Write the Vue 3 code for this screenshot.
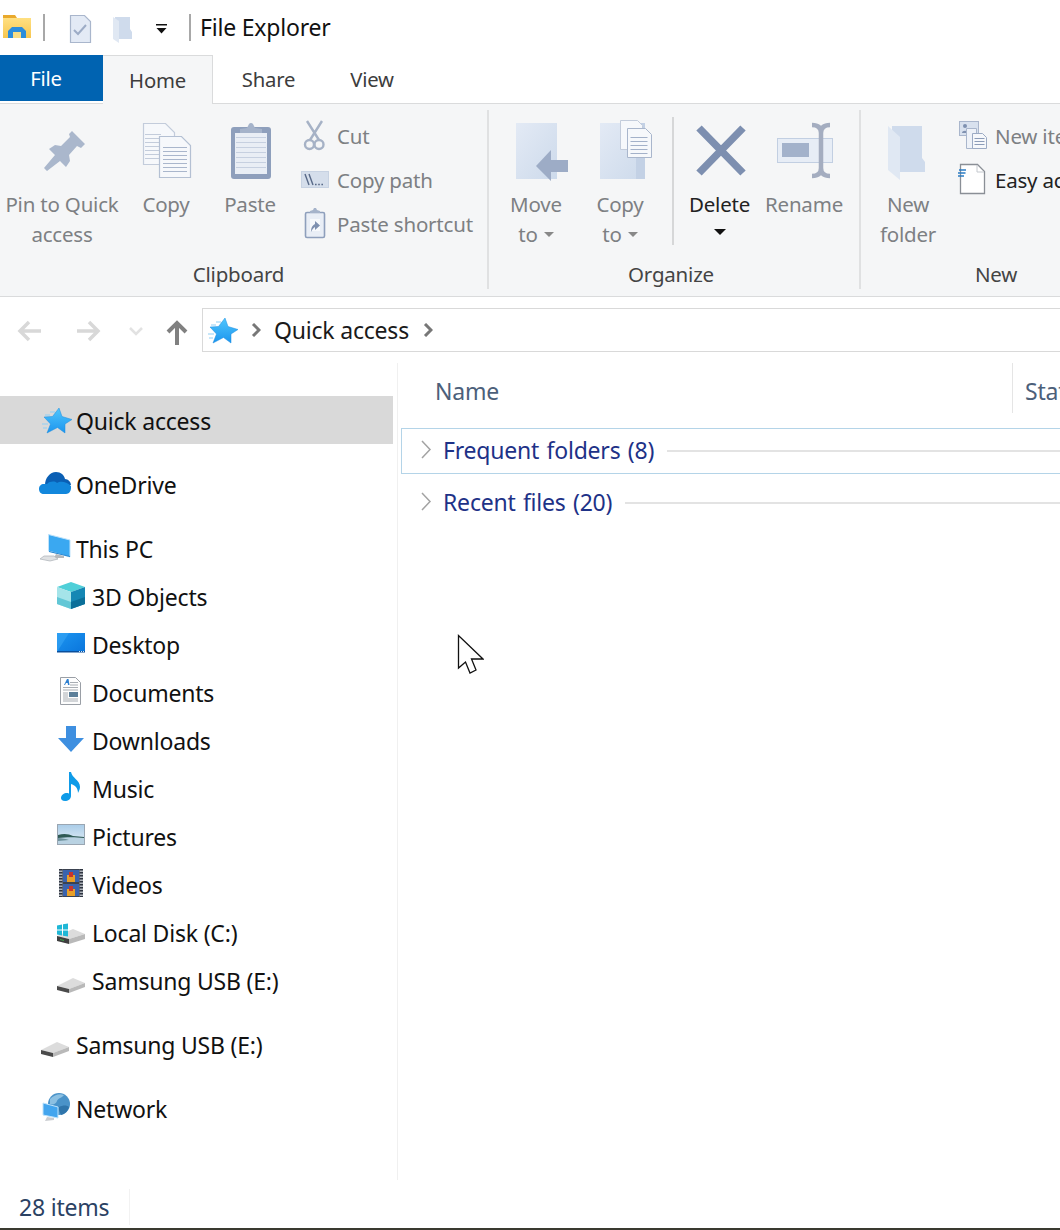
<template>
  <div class="explorer">
    <!-- shared icons -->
    <svg class="defs" aria-hidden="true">
      <defs>
        <linearGradient id="paper" x1="0" y1="0" x2="1" y2="1">
          <stop offset="0" stop-color="#e3eaf5" />
          <stop offset="1" stop-color="#cddaeb" />
        </linearGradient>
        <linearGradient id="starFill" x1="0" y1="0" x2="0" y2="1">
          <stop offset="0" stop-color="#4fc6fd" />
          <stop offset="1" stop-color="#1c95ee" />
        </linearGradient>
        <linearGradient id="folderFill" x1="0" y1="0" x2="0" y2="1">
          <stop offset="0" stop-color="#ffe082" />
          <stop offset="1" stop-color="#f7c64f" />
        </linearGradient>
        <linearGradient id="deskFill" x1="0" y1="0" x2="1" y2="1">
          <stop offset="0" stop-color="#1c95f0" />
          <stop offset="1" stop-color="#0a75dc" />
        </linearGradient>
        <linearGradient id="skyFill" x1="0" y1="0" x2="0" y2="1">
          <stop offset="0" stop-color="#a9cce8" />
          <stop offset="1" stop-color="#e6f0f7" />
        </linearGradient>
      </defs>

      <!-- big ribbon icons: viewBox is in page coordinates -->
      <symbol id="b-pin" viewBox="0 110 124 80">
        <path fill="#aab7cc" d="M72 131 85 144 81 148 77 146 69 155 70 161 66 167 60 161 47 171 44 168 55 155 49 149 55 145 61 146 70 137 69 134Z" />
      </symbol>
      <symbol id="b-copy" viewBox="124 110 84 80">
        <path fill="#f6f8fb" stroke="#c3ccdb" stroke-width="1.2" d="M143.5 123.5h22l9 9v32h-31z" />
        <path fill="none" stroke="#c3ccdb" stroke-width="16" stroke-dasharray="1 3" d="M153 134v26" />
        <path fill="#f6f8fb" stroke="#b4c0d3" stroke-width="1.2" d="M159.5 136.5h22l9 9v32h-31z" />
        <path fill="none" stroke="#a9b6cc" stroke-width="24" stroke-dasharray="1 3" d="M175 147v28" />
      </symbol>
      <symbol id="b-paste" viewBox="208 110 84 80">
        <rect x="231" y="127" width="40" height="52" rx="3" fill="#8e9fbc" />
        <rect x="235" y="133" width="32" height="41" fill="#e9eef5" />
        <path fill="none" stroke="#c6d0e0" stroke-width="30" stroke-dasharray="1 4" d="M251 137v35" />
        <path fill="#a5b3ca" d="M240 133v-4l7-1 2-4a2.500 2.500 0 0 1 4 0l2 4 7 1v4z" />
      </symbol>
      <symbol id="b-move" viewBox="494 110 84 80">
        <rect x="516" y="123" width="41" height="56" fill="url(#paper)" />
        <path fill="#9dacc6" d="M536 166 551 150V160H568V172H551V181Z" />
      </symbol>
      <symbol id="b-copyto" viewBox="578 110 84 80">
        <rect x="600" y="123" width="45" height="56" fill="url(#paper)" />
        <rect x="636" y="123" width="9" height="56" fill="#c3d1e5" />
        <path fill="#f6f8fb" stroke="#c3ccdb" d="M620.5 120.5h17l5 5v24h-22z" />
        <path fill="#f6f8fb" stroke="#a9b6cc" d="M627.5 128.5h18l6 6v23h-24z" />
        <path fill="none" stroke="#a3b1c9" stroke-width="17" stroke-dasharray="1 3" d="M639 137v19" />
      </symbol>
      <symbol id="b-delete" viewBox="677 110 85 80">
        <path fill="none" stroke="#7d8fb0" stroke-width="7.5" d="M699 128 743 173M743 128 699 173" />
      </symbol>
      <symbol id="b-rename" viewBox="762 110 84 80">
        <rect x="777.5" y="138.5" width="55" height="24" fill="#e7edf6" stroke="#c2cfe2" />
        <rect x="782" y="143" width="27" height="14" fill="#a3b2cb" />
        <path fill="none" stroke="#a4adc0" stroke-width="4.5" d="M812 125c6 0 9 3 9 8v35c0 5-3 8-9 8M830 125c-6 0-9 3-9 8v35c0 5 3 8 9 8" />
      </symbol>
      <symbol id="b-folder" viewBox="861 110 94 80">
        <path fill="#cfdbec" d="M892 126h30v32l3 4v10h-33z" />
        <path fill="#e0e8f3" d="M888 126 900 137V180L888 170Z" />
      </symbol>

      <!-- small ribbon icons, a row is 37x44 -->
      <symbol id="s-cut" viewBox="300 115 37 44">
        <g fill="none" stroke="#a6b2c6" stroke-width="2.4">
          <path d="M307 121 319 140M322 121 310 140" />
          <circle cx="309.5" cy="144.5" r="4.5" />
          <circle cx="319" cy="144.5" r="4.5" />
        </g>
      </symbol>
      <symbol id="s-path" viewBox="300 159 37 44">
        <rect x="301.5" y="171.5" width="27" height="16" fill="#d5deeb" stroke="#c7d2e2" />
        <path fill="none" stroke="#596a88" stroke-width="1.4" d="M305 174 309 185M309 174 313 185" />
        <path fill="none" stroke="#596a88" stroke-width="1.6" stroke-dasharray="1.6 1.6" d="M315 184.500h9" />
      </symbol>
      <symbol id="s-short" viewBox="300 203 37 44">
        <rect x="305.500" y="212.500" width="19" height="25" rx="1.500" fill="#e9eef6" stroke="#8e9fbc" stroke-width="1.600" />
        <path fill="#a5b3ca" d="M310 213v-2l3-1 1-2h2l1 2 3 1v2z" />
        <rect x="310" y="219" width="10" height="12" fill="#f7f9fc" />
        <path fill="#7f91b0" d="M311 232c0-5 2-7 4-8v-3l5 4.500-5 4.500v-3c-2 1-3 3-4 5z" />
      </symbol>
      <symbol id="s-newitem" viewBox="958 115 37 44">
        <rect x="959.500" y="121.500" width="19" height="14" fill="#d8e1ee" stroke="#a9b6cc" />
        <circle cx="965" cy="126" r="2" fill="#7f91b0" />
        <path fill="#7f91b0" d="M962 133c0-3 6-3 6 0z" />
        <path fill="#eef2f8" stroke="#a9b6cc" d="M966.500 128.500h10v20h-10z" />
        <path fill="#f6f8fb" stroke="#9cabc4" d="M972.500 133.500h10l4 4v11h-14z" />
        <path fill="none" stroke="#8c9cb8" stroke-width="10" stroke-dasharray="1 2" d="M979.500 138v9" />
      </symbol>
      <symbol id="s-easy" viewBox="958 159 37 44">
        <path fill="#fff" stroke="#8a8f96" stroke-width="1.300" d="M960.500 164.500h17l7 7v22h-24z" />
        <path fill="none" stroke="#c4c8ce" d="M977 165v7h7" />
        <path fill="none" stroke="#2b7cc4" stroke-width="1.500" d="M959 170h7M957.500 173h8M958 176h6" />
      </symbol>

      <!-- navigation tree icons, 36x36 -->
      <symbol id="t-star" viewBox="0 0 36 36">
        <path fill="url(#starFill)" stroke="#1b8ce0" stroke-width=".5" d="M21 6 24 14.500 34 17.500 27 22 27 31 19.500 25.500 9 31 12.500 22 6 15 14.500 14.500Z" />
        <path fill="none" stroke="#8fd0f5" stroke-width="1.200" d="M12 10h5M7 13h5M4 22h6M5 26h4" />
      </symbol>
      <symbol id="t-onedrive" viewBox="0 0 36 36">
        <path fill="#0a5fb4" d="M7 19c0-7 5-13 11-13 5 0 8 3 9 7 3 0 6 3 6 6z" />
        <path fill="#1287dc" d="M1 23c0-3 2-5 5-5h3c3-3 8-3 10-1 3-2 9-2 14 3v2c0 3-2 6-5 6H6c-3 0-5-2-5-5z" />
      </symbol>
      <symbol id="t-pc" viewBox="0 0 36 36">
        <path fill="#3aa8f1" stroke="#bfe3fb" d="M10.500 4.500 32 10V27L10.500 21Z" />
        <path fill="#2585d0" d="M11 21 32 26V27L11 22Z" />
        <path fill="#b5b9bd" d="M18 24 26 26V28H16Z" />
        <path fill="#dfe1e3" stroke="#aab0b6" stroke-width=".7" d="M6 26H16L20 29 12 31 2 29Z" />
      </symbol>
      <symbol id="t-cube" viewBox="0 0 36 36">
        <path fill="#4fcfd8" d="M3 9 17 4 31 9 17 14Z" />
        <path fill="#a5e4e9" d="M3 9 17 14V31L3 26Z" />
        <path fill="#1587b4" d="M17 14 31 9V26L17 31Z" />
        <path fill="#62c7d6" d="M3 19 17 24V31L3 26Z" />
        <path fill="#0b6f99" d="M17 24 31 19V26L17 31Z" />
      </symbol>
      <symbol id="t-desktop" viewBox="0 0 36 36">
        <rect x="3" y="7" width="28" height="19" fill="url(#deskFill)" />
        <path fill="#3aa7f5" d="M3 26 15 7H3z" opacity=".55" />
        <rect x="3" y="25" width="28" height="1.500" fill="#0a4f9c" />
        <path fill="none" stroke="#cfe8fb" stroke-width="1" stroke-dasharray="1 1" d="M25 25.500h5" />
      </symbol>
      <symbol id="t-docs" viewBox="0 0 36 36">
        <path fill="#fdfdfd" stroke="#9a9fa6" d="M6.500 3.500h15l5 5v22h-20z" />
        <path fill="#2d7fd0" d="M10 11l3-6h1.500l1 6h-1.500l-.3-2h-1.700l-1 2z" />
        <path fill="none" stroke="#a8adb3" stroke-width="1" d="M9 13.500h15M16 8.500h8M16 11h8M9 16h15M9 27h15M9 25h15" />
        <rect x="15" y="18" width="9" height="5" fill="#5c7f99" />
        <path fill="none" stroke="#a8adb3" stroke-width="1" d="M9 19h5M9 21h5M9 23h5" />
      </symbol>
      <symbol id="t-down" viewBox="0 0 36 36">
        <path fill="#3e8fe0" d="M12 4h10v12h8L17 30 4 16h8z" />
      </symbol>
      <symbol id="t-music" viewBox="0 0 36 36">
        <path fill="#0f9be8" d="M15 2h2c1 6 9 8 9 15 0 2-1 4-2 6 0-5-3-8-7-9v12c0 3-3 5-6 5-3 0-4-2-4-3 0-3 3-5 6-5 1 0 2 0 2 1z" />
      </symbol>
      <symbol id="t-pics" viewBox="0 0 36 36">
        <rect x="3.500" y="6.500" width="27" height="20" fill="url(#skyFill)" stroke="#9aa6b2" />
        <path fill="#2f5a55" d="M4 17c6-2 11-1 15 1l11 1v2H4z" />
        <path fill="#b9d2e2" d="M4 20c8-1 18-1 26 0v6H4z" />
        <path fill="#6f929c" d="M4 20c4 0 8 1 11 2l-11 1z" />
      </symbol>
      <symbol id="t-video" viewBox="0 0 36 36">
        <rect x="5" y="3" width="24" height="28" fill="#3b4250" />
        <rect x="5" y="3" width="3.500" height="28" fill="#aeb3ba" />
        <rect x="25.500" y="3" width="3.500" height="28" fill="#aeb3ba" />
        <path fill="none" stroke="#2f3540" stroke-width="3.500" stroke-dasharray="1.500 1.500" d="M6.750 3v28M27.250 3v28" />
        <rect x="9" y="4" width="16" height="12" fill="#3a63ad" />
        <rect x="9" y="18" width="16" height="12" fill="#3a63ad" />
        <path fill="#e8a02a" d="M13 9h8v7h-8zM13 23h8v7h-8z" />
        <path fill="#c9352d" d="M15 6h4v5h-4zM15 20h4v5h-4z" />
      </symbol>
      <symbol id="t-drive" viewBox="0 0 36 36">
        <path fill="#dcdcdc" d="M3 24 19 16 31 21 15 27Z" />
        <path fill="#b9b9b9" d="M15 27 31 21V25L15 31Z" />
        <path fill="#4a4a4a" d="M3 24 15 27V31L3 28Z" />
      </symbol>
      <symbol id="t-disk" viewBox="0 0 36 36">
        <path fill="#dcdcdc" d="M3 22 19 15 31 20 15 25Z" />
        <path fill="#b9b9b9" d="M15 25 31 20V25L15 30Z" />
        <path fill="#3f3f3f" d="M3 22 15 25V30L3 27Z" />
        <path fill="#3fa34d" d="M6 25 10 26V27L6 26Z" />
        <path fill="#1fb7d6" d="M3 11.500 8 10.500V15.500H3zM9 10.300 14 9.500V15.500H9zM3 16.500H8V21.500L3 20.500zM9 16.500H14V22.500L9 21.700z" />
      </symbol>
      <symbol id="t-net" viewBox="0 0 36 36">
        <circle cx="21" cy="14" r="11" fill="#4a93c9" />
        <path fill="#8cc0e2" d="M12 9c4-4 10-6 14-4-2 3-6 3-7 6s-4 4-7 3z" />
        <path fill="#2f75ab" d="M21 17c4-2 8-2 10 0-1 4-4 7-8 8-1-3-3-5-2-8z" />
        <path fill="#43a5ee" stroke="#bfe3fb" d="M5 13 20 17V28L5 25Z" />
        <path fill="#c9ccd0" d="M9 27 16 28V30L7 31Z" />
      </symbol>
    </svg>

    <!-- title bar -->
    <header class="titlebar">
      <svg class="qat-folder" width="34" height="55" viewBox="0 0 34 55">
        <path fill="#e9a92c" d="M3 15h12l2 3H3z" />
        <rect x="3" y="18" width="28" height="20" fill="url(#folderFill)" />
        <path fill="#2c8ddc" d="M8 31l4-4h10l4 4v7H8z" />
        <rect x="13" y="32" width="8" height="6" fill="#f9dd85" />
      </svg>
      <span class="qat-sep first"></span>
      <svg class="qat-doc" width="30" height="55" viewBox="66 0 30 55">
        <path fill="#e3eaf5" stroke="#a9b6cc" stroke-width="1.200" d="M70.500 15.500h14l6 6v21h-20z" />
        <path fill="none" stroke="#9dacc6" stroke-width="2" d="M74 30 78 34 86 25" />
      </svg>
      <svg class="qat-new" width="30" height="55" viewBox="108 0 30 55">
        <path fill="#cfdbec" d="M115 17h15v12l2 3v7h-17z" />
        <path fill="#e0e8f3" d="M113 17 119 21V43L113 39Z" />
      </svg>
      <svg class="qat-drop" width="22" height="55" viewBox="150 0 22 55">
        <path fill="#111" d="M156 24h11v1.500h-11zM156.500 28h10L161.500 33.500z" />
      </svg>
      <span class="qat-sep"></span>
      <span class="title">File Explorer</span>
    </header>

    <!-- tabs -->
    <nav class="tabs">
      <div v-for="tab in tabs" :key="tab.name" class="tab" :class="tab.cls">{{ tab.name }}</div>
    </nav>

    <!-- ribbon -->
    <section class="ribbon">
      <div v-for="group in ribbon" :key="group.name" class="group" :class="group.cls">
        <div class="group-body">
          <template v-for="item in group.items" :key="item.id">
            <span v-if="item.type === 'divider'" class="inner-divider"></span>
            <div v-else-if="item.type === 'big'" class="big-btn" :style="{ width: item.w + 'px' }">
              <svg class="big-ico" :width="item.w" height="80"><use :href="'#b-' + item.id" /></svg>
              <div class="big-label" :class="{ on: item.on }">
                <div>{{ item.lines[0] }}</div>
                <div v-if="item.lines[1] || item.caret">
                  {{ item.lines[1] }}<i v-if="item.caret" class="caret" :class="{ dark: item.on }"></i>
                </div>
              </div>
            </div>
            <div v-else class="small-col">
              <div v-for="row in item.rows" :key="row.id" class="small-btn" :class="{ on: row.on }">
                <svg class="small-ico" width="37" height="44"><use :href="'#s-' + row.id" /></svg>
                <span>{{ row.label }}</span>
              </div>
            </div>
          </template>
        </div>
        <div class="group-label">{{ group.name }}</div>
      </div>
    </section>

    <!-- address bar -->
    <section class="addressbar">
      <svg class="nav-ico" width="190" height="44" viewBox="12 308 190 44">
        <g fill="none" stroke="#d8d8d8" stroke-width="3.500">
          <path d="M41 331H21M29 322 20 331 29 340" />
          <path d="M77 331H97M89 322 98 331 89 340" />
        </g>
        <path fill="none" stroke="#e2e2e2" stroke-width="2.500" d="M130 328 136 334 142 328" />
        <path fill="none" stroke="#808080" stroke-width="4" d="M177 345V324M168 332 177 323 186 332" />
      </svg>
      <div class="address">
        <svg class="addr-star" width="36" height="36"><use href="#t-star" /></svg>
        <svg class="crumb" width="10" height="14" viewBox="0 0 10 14"><path fill="none" stroke="#777" stroke-width="3" d="M2 1 8 7 2 13" /></svg>
        <span class="addr-text">Quick access</span>
        <svg class="crumb last" width="10" height="14" viewBox="0 0 10 14"><path fill="none" stroke="#777" stroke-width="3" d="M2 1 8 7 2 13" /></svg>
      </div>
    </section>

    <!-- nav + files -->
    <div class="body">
      <aside class="tree">
        <div v-for="(block, i) in tree" :key="i" class="tree-block">
          <div
            v-for="node in block"
            :key="node.label"
            class="tree-row"
            :class="{ child: node.child, selected: node.selected }"
          >
            <svg class="tree-ico" width="36" height="36"><use :href="'#t-' + node.icon" /></svg>
            <span>{{ node.label }}</span>
          </div>
        </div>
      </aside>
      <main class="files">
        <div class="col-head">
          <span class="col-name">Name</span>
          <span class="col-status">Status</span>
        </div>
        <div
          v-for="g in fileGroups"
          :key="g.name"
          class="file-group"
          :class="{ focused: g.focused }"
        >
          <svg class="chev" width="12" height="20" viewBox="0 0 12 20"><path fill="none" stroke="#a3a3a3" stroke-width="1.500" d="M2 1 10 9.500 2 18" /></svg>
          <span class="group-title">{{ g.name }}</span>
          <span class="group-line"></span>
        </div>
      </main>
    </div>

    <footer class="status">
      <span class="count">28 items</span>
    </footer>
    <div class="edge"></div>

    <!-- mouse pointer -->
    <svg class="pointer" width="28" height="42" viewBox="456 633 28 42">
      <path fill="#fff" stroke="#111" stroke-width="1.300" d="M458.500 635.500V668L465.500 662 470 673 476 670 471.500 659H483Z" />
    </svg>
  </div>
</template>

<script setup>
const tabs = [
  { name: "File", cls: "file" },
  { name: "Home", cls: "home" },
  { name: "Share", cls: "share" },
  { name: "View", cls: "view" },
];

const ribbon = [
  {
    name: "Clipboard",
    cls: "clipboard",
    items: [
      { type: "big", id: "pin", w: 124, lines: ["Pin to Quick", "access"] },
      { type: "big", id: "copy", w: 84, lines: ["Copy"] },
      { type: "big", id: "paste", w: 84, lines: ["Paste"] },
      {
        type: "small",
        id: "clip-small",
        rows: [
          { id: "cut", label: "Cut" },
          { id: "path", label: "Copy path" },
          { id: "short", label: "Paste shortcut" },
        ],
      },
    ],
  },
  {
    name: "Organize",
    cls: "organize",
    items: [
      { type: "big", id: "move", w: 84, lines: ["Move", "to"], caret: true },
      { type: "big", id: "copyto", w: 84, lines: ["Copy", "to"], caret: true },
      { type: "divider", id: "org-div" },
      { type: "big", id: "delete", w: 85, lines: ["Delete"], caret: true, on: true },
      { type: "big", id: "rename", w: 84, lines: ["Rename"] },
    ],
  },
  {
    name: "New",
    cls: "newgroup",
    items: [
      { type: "big", id: "folder", w: 94, lines: ["New", "folder"] },
      {
        type: "small",
        id: "new-small",
        rows: [
          { id: "newitem", label: "New item" },
          { id: "easy", label: "Easy access", on: true },
        ],
      },
    ],
  },
];

const tree = [
  [{ label: "Quick access", icon: "star", selected: true }],
  [{ label: "OneDrive", icon: "onedrive" }],
  [
    { label: "This PC", icon: "pc" },
    { label: "3D Objects", icon: "cube", child: true },
    { label: "Desktop", icon: "desktop", child: true },
    { label: "Documents", icon: "docs", child: true },
    { label: "Downloads", icon: "down", child: true },
    { label: "Music", icon: "music", child: true },
    { label: "Pictures", icon: "pics", child: true },
    { label: "Videos", icon: "video", child: true },
    { label: "Local Disk (C:)", icon: "disk", child: true },
    { label: "Samsung USB (E:)", icon: "drive", child: true },
  ],
  [{ label: "Samsung USB (E:)", icon: "drive" }],
  [{ label: "Network", icon: "net" }],
];

const fileGroups = [
  { name: "Frequent folders (8)", focused: true },
  { name: "Recent files (20)" },
];
</script>

<style>
html,
body {
  margin: 0;
  background: #fff;
}
</style>

<style scoped>
.explorer {
  position: relative;
  width: 1060px;
  height: 1230px;
  overflow: hidden;
  background: #fff;
  color: #1a1a1a;
  font-family: "Noto Sans", "Open Sans", sans-serif;
  font-size: 23px;
  letter-spacing: -0.2px;
  white-space: nowrap;
}
.defs {
  display: block;
  width: 0;
  height: 0;
  overflow: hidden;
}
svg {
  display: block;
  flex: none;
}

.titlebar {
  display: flex;
  align-items: center;
  height: 55px;
}
.qat-sep {
  width: 2px;
  height: 27px;
  margin-left: 17px;
  background: #a8a8a8;
}
.qat-sep.first {
  margin-left: 9px;
}
.qat-doc {
  margin-left: 21px;
}
.qat-new,
.qat-drop {
  margin-left: 12px;
}
.title {
  margin: 0 0 2px 9px;
  color: #111;
}

.tabs {
  display: flex;
  height: 48px;
  border-bottom: 1px solid #dadbdc;
  font-size: 20.300px;
}
.tab {
  height: 48px;
  line-height: 48px;
  text-align: center;
  color: #3d3d3d;
  box-sizing: border-box;
}
.tab.file {
  width: 103px;
  height: 46px;
  line-height: 46px;
  padding-right: 11px;
  background: #0063b1;
  color: #fff;
}
.tab.home {
  width: 110px;
  height: 49px;
  background: #f5f6f7;
  border-top: 1px solid #dadbdc;
  border-right: 1px solid #dadbdc;
}
.tab.share {
  width: 111px;
}
.tab.view {
  width: 96px;
}

.ribbon {
  display: flex;
  height: 193px;
  padding-top: 6px;
  box-sizing: border-box;
  background: #f5f6f7;
  border-bottom: 1px solid #dadbdc;
  color: #7d8083;
  font-size: 20.500px;
}
.group {
  flex: none;
  height: 179px;
}
.group.clipboard {
  width: 487px;
  border-right: 2px solid #e0e1e2;
}
.group.organize {
  width: 370px;
  border-right: 2px solid #e0e1e2;
}
.group.newgroup {
  width: 270px;
}
.group-body {
  display: flex;
  height: 152px;
}
.organize .group-body {
  padding-left: 5px;
}
.group-label {
  height: 27px;
  line-height: 24px;
  text-align: center;
  color: #444;
}
.clipboard .group-label {
  padding-right: 10px;
}
.organize .group-label {
  padding-right: 6px;
}
.big-label {
  margin-top: -1px;
  text-align: center;
  line-height: 30px;
}
.big-label.on {
  color: #222;
}
.caret {
  display: inline-block;
  width: 0;
  height: 0;
  margin-left: 6px;
  vertical-align: 5px;
  border-left: 5px solid transparent;
  border-right: 5px solid transparent;
  border-top: 5px solid #888;
}
.caret.dark {
  margin-left: 0;
  vertical-align: 7px;
  border-left-width: 6px;
  border-right-width: 6px;
  border-top: 6px solid #111;
}
.inner-divider {
  width: 2px;
  height: 128px;
  margin: 7px 3px 0 10px;
  background: #d6d7d8;
}
.small-col {
  margin: 5px 0 0 8px;
}
.newgroup .small-col {
  margin-left: 3px;
}
.small-btn {
  display: flex;
  align-items: center;
  height: 44px;
}
.small-btn span {
  margin-bottom: 2px;
}
.small-btn.on {
  color: #222;
}

.addressbar {
  display: flex;
  height: 66px;
  padding-top: 11px;
  box-sizing: border-box;
}
.nav-ico {
  margin-left: 12px;
}
.address {
  display: flex;
  align-items: center;
  flex: 1;
  height: 44px;
  box-sizing: border-box;
  border: 1px solid #d9d9d9;
  border-right: 0;
  color: #1a1a1a;
}
.addr-star {
  margin-left: 1px;
}
.crumb {
  margin-left: 11px;
}
.crumb.last {
  margin-left: 14px;
}
.addr-text {
  margin-left: 13px;
}

.body {
  display: flex;
  height: 817px;
}
.tree {
  flex: none;
  display: flex;
  flex-direction: column;
  gap: 16px;
  width: 398px;
  padding-top: 33px;
  box-sizing: border-box;
  border-right: 1px solid #f0f0f0;
}
.tree-row {
  display: flex;
  align-items: center;
  gap: 2px;
  width: 393px;
  height: 48px;
  padding-left: 38px;
  box-sizing: border-box;
  color: #111;
}
.tree-row span {
  margin-top: 2px;
}
.tree-row.child {
  padding-left: 54px;
}
.tree-row.selected {
  background: #d9d9d9;
}

.files {
  flex: 1;
  min-width: 0;
  padding-left: 3px;
}
.col-head {
  display: flex;
  height: 65px;
  color: #4c607a;
}
.col-name {
  flex: none;
  width: 577px;
  margin-left: 34px;
  height: 50px;
  line-height: 57px;
}
.col-status {
  flex: none;
  height: 50px;
  line-height: 57px;
  padding-left: 12px;
  border-left: 1px solid #e5e5e5;
}
.file-group {
  display: flex;
  align-items: center;
  height: 46px;
  margin-bottom: 6px;
  padding-left: 18px;
  box-sizing: border-box;
  border: 1px solid transparent;
  border-right: 0;
}
.file-group.focused {
  border-color: #b4d4e8;
}
.chev {
  margin-bottom: 3px;
}
.group-title {
  margin: 0 0 2px 11px;
  color: #1e3287;
  word-spacing: 1.500px;
}
.group-line {
  flex: 1;
  height: 2px;
  margin-left: 13px;
  background: #e3e3e3;
}

.status {
  display: flex;
  align-items: center;
  height: 48px;
  padding: 6px 0 0 19px;
  box-sizing: border-box;
  color: #2b4263;
}
.count {
  padding-right: 20px;
  line-height: 36px;
  border-right: 1px solid #f2f2f2;
}
.edge {
  height: 2px;
  background: #3a3a30;
}

.pointer {
  position: absolute;
  left: 456px;
  top: 633px;
}
</style>
